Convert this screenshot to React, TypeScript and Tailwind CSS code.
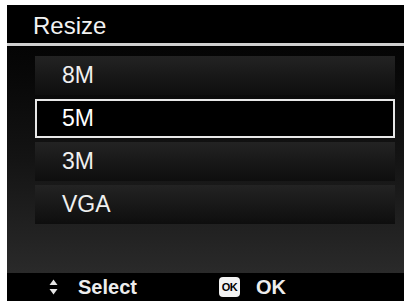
import React from "react";

const sizes = ["8M", "5M", "3M", "VGA"];
const selected = "5M";

const UpDown = () => (
  <svg width="9" height="16" viewBox="0 0 9 16" className="text-[#e6e6e6]">
    <path d="M4.5 0.5 L8.5 6 H0.5 Z" fill="currentColor" />
    <path d="M4.5 15.5 L8.5 10 H0.5 Z" fill="currentColor" />
  </svg>
);

export default function App() {
  return (
    <div
      className="h-[301px] w-[406px] overflow-hidden bg-white pl-[7px] pr-[2px] pt-[5px]"
      style={{ fontFamily: '"Liberation Sans", Arial, sans-serif' }}
    >
      <div className="flex h-[296px] flex-col bg-black">
        <div className="flex h-[38px] items-center pl-[26px] pt-[4px] text-[24px] text-[#f2f2f2]">
          Resize
        </div>
        <div className="h-[3px] bg-[#cfcfcf]" />
        <div className="h-px bg-black" />
        <div className="flex h-[226px] flex-col gap-[4px] bg-gradient-to-b from-[#050505] via-[#141414] to-[#2a2a2a] pl-[28px] pr-[9px] pt-[9px]">
          {sizes.map((s) =>
            s === selected ? (
              <div
                key={s}
                className="flex h-[39px] items-center border-2 border-[#e8e8e8] bg-black pl-[25px] text-[23px] text-white"
              >
                {s}
              </div>
            ) : (
              <div
                key={s}
                className="flex h-[39px] items-center bg-gradient-to-b from-[#232323] to-[#0e0e0e] pl-[27px] text-[23px] text-[#f0f0f0]"
              >
                {s}
              </div>
            )
          )}
        </div>
        <div className="flex h-[28px] items-center bg-black text-[20px] font-bold text-[#ededed]">
          <div className="ml-[42px]">
            <UpDown />
          </div>
          <span className="ml-[20px]">Select</span>
          <span className="ml-[82px] flex h-[20px] w-[21px] items-center justify-center rounded-[4px] bg-[#f2f2f2] text-[11px] font-bold tracking-tighter text-black">
            OK
          </span>
          <span className="ml-[16px]">OK</span>
        </div>
      </div>
    </div>
  );
}
